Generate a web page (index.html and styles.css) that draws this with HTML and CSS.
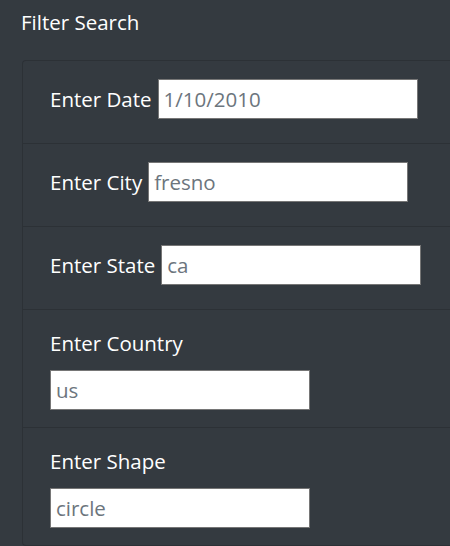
FILE: index.html
```html
<!DOCTYPE html>
<html lang="en">
<head>
<meta charset="utf-8">
<title>Filter Search</title>
<link rel="stylesheet" href="styles.css">
</head>
<body>
<h5 class="title">Filter Search</h5>
<ul class="filters">
  <li class="filter filter-inline">
    <label class="filter-label" for="date">Enter Date</label>
    <input class="filter-input" id="date" type="text" value="1/10/2010">
  </li>
  <li class="filter filter-inline">
    <label class="filter-label" for="city">Enter City</label>
    <input class="filter-input" id="city" type="text" value="fresno">
  </li>
  <li class="filter filter-inline">
    <label class="filter-label" for="state">Enter State</label>
    <input class="filter-input" id="state" type="text" value="ca">
  </li>
  <li class="filter filter-stacked">
    <label class="filter-label" for="country">Enter Country</label>
    <input class="filter-input" id="country" type="text" value="us">
  </li>
  <li class="filter filter-stacked">
    <label class="filter-label" for="shape">Enter Shape</label>
    <input class="filter-input" id="shape" type="text" value="circle">
  </li>
</ul>
</body>
</html>
```
FILE: styles.css
```css
html, body {
  margin: 0;
  padding: 0;
  background: #343a40;
  overflow: hidden;
}
body {
  font-family: "Open Sans", "Noto Sans", sans-serif;
  color: #ffffff;
  width: 450px;
  height: 546px;
}
.title {
  margin: 0;
  padding: 7px 0 0 21px;
  font-size: 20.5px;
  font-weight: 400;
  line-height: 30px;
}
.filters {
  list-style: none;
  margin: 23px 0 0 22px;
  padding: 0;
  border: 1px solid #2c3136;
  border-right: none;
  border-radius: 4px 0 0 4px;
}
.filter {
  border-top: 1px solid #2c3136;
  padding: 18px 27px 24px;
}
.filter:first-child {
  border-top: none;
}
.filter-inline {
  display: flex;
  align-items: center;
  gap: 6px;
}
.filter-stacked {
  padding-bottom: 17px;
}
.filter-label {
  font-size: 20.5px;
  line-height: 30px;
}
.filter-stacked .filter-label {
  display: block;
  margin-bottom: 12px;
}
.filter-input {
  box-sizing: border-box;
  width: 260px;
  height: 40px;
  margin: 0;
  padding: 0 5px;
  border: 1px solid #767676;
  border-radius: 0;
  background: #ffffff;
  color: #6c757d;
  font-family: "Open Sans", "Noto Sans", sans-serif;
  font-size: 20.5px;
}
.filter-stacked .filter-input {
  display: block;
}
```
